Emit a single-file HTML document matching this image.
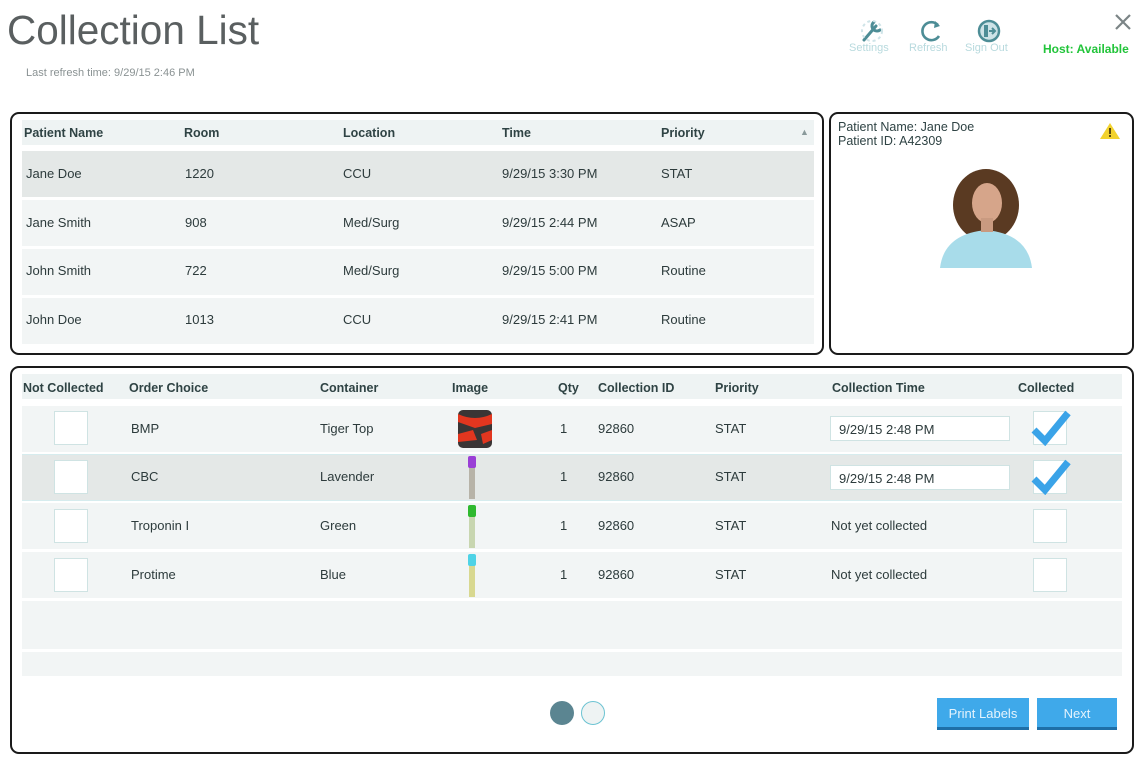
<!DOCTYPE html>
<html><head><meta charset="utf-8"><style>
*{margin:0;padding:0;box-sizing:border-box}
body{width:1144px;height:763px;background:#fff;font-family:"Liberation Sans",sans-serif;color:#2d3b3c;position:relative;overflow:hidden}
.a{position:absolute;white-space:nowrap}
.panel{position:absolute;border:2px solid #1a1a1a;border-radius:9px;background:#fff}
.h{font-weight:bold;font-size:12.5px;color:#2f4344}
.t{font-size:13px}
.row{position:absolute;background:#f2f5f5}
.cb{position:absolute;width:34px;height:34px;background:#fff;border:1px solid #cfe3e3}
</style></head><body>
<div class="a" style="left:7px;top:7px;font-size:40.5px;color:#5a5f60">Collection List</div>
<div class="a" style="left:26px;top:67px;font-size:11px;color:#8a9293">Last refresh time: 9/29/15 2:46 PM</div>

<svg class="a" style="left:858px;top:18px" width="28" height="26" viewBox="0 0 28 26"><g stroke="#4d8d96" stroke-width="3" stroke-linecap="round" fill="none"><path d="M6 22 L18 8"/><path d="M16 4 a5 5 0 0 0 6 8"/></g><circle cx="14" cy="13" r="10" fill="none" stroke="#cfe4e8" stroke-width="2" stroke-dasharray="3 3"/></svg>
<svg class="a" style="left:918px;top:18px" width="26" height="26" viewBox="0 0 26 26"><path d="M20 7 A9 9 0 1 0 21 18" fill="none" stroke="#4d8d96" stroke-width="2.6"/><path d="M17 3 L22 8 L16 10 Z" fill="#4d8d96"/></svg>
<svg class="a" style="left:976px;top:18px" width="26" height="26" viewBox="0 0 26 26"><circle cx="13" cy="13" r="10" fill="#cde3e7" stroke="#4d8d96" stroke-width="2.5"/><rect x="8" y="7" width="4" height="12" fill="#4d8d96"/><path d="M13 13 h6 M16 10 l3 3 -3 3" stroke="#4d8d96" stroke-width="2" fill="none"/></svg>
<div class="a" style="left:849px;top:42px;font-size:11px;color:#b8dade">Settings</div>
<div class="a" style="left:909px;top:42px;font-size:11px;color:#b8dade">Refresh</div>
<div class="a" style="left:965px;top:42px;font-size:11px;color:#b8dade">Sign Out</div>
<svg class="a" style="left:1114px;top:13px" width="18" height="18" viewBox="0 0 18 18"><path d="M2 2 L16 16 M16 2 L2 16" stroke="#7b8486" stroke-width="2.2"/></svg>
<div class="a" style="left:1043px;top:42px;font-size:12px;font-weight:bold;color:#22c43a">Host: Available</div>

<div class="panel" style="left:10px;top:112px;width:814px;height:243px"></div>
<div class="row" style="left:22px;top:120px;width:792px;height:25px;background:#eef3f3"></div>
<div class="a h" style="left:24px;top:126px">Patient Name</div>
<div class="a h" style="left:184px;top:126px">Room</div>
<div class="a h" style="left:343px;top:126px">Location</div>
<div class="a h" style="left:502px;top:126px">Time</div>
<div class="a h" style="left:661px;top:126px">Priority</div>
<div class="a" style="left:800px;top:127px;font-size:9px;color:#8a9a9b">▲</div>
<div class="row" style="left:22px;top:151px;width:792px;height:46px;background:#e4e8e7"></div>
<div class="row" style="left:22px;top:200px;width:792px;height:46px"></div>
<div class="row" style="left:22px;top:249px;width:792px;height:46px"></div>
<div class="row" style="left:22px;top:298px;width:792px;height:46px"></div>
<div class="a t" style="left:26px;top:166px">Jane Doe</div><div class="a t" style="left:185px;top:166px">1220</div><div class="a t" style="left:343px;top:166px">CCU</div><div class="a t" style="left:502px;top:166px">9/29/15 3:30 PM</div><div class="a t" style="left:661px;top:166px">STAT</div>
<div class="a t" style="left:26px;top:215px">Jane Smith</div><div class="a t" style="left:185px;top:215px">908</div><div class="a t" style="left:343px;top:215px">Med/Surg</div><div class="a t" style="left:502px;top:215px">9/29/15 2:44 PM</div><div class="a t" style="left:661px;top:215px">ASAP</div>
<div class="a t" style="left:26px;top:263px">John Smith</div><div class="a t" style="left:185px;top:263px">722</div><div class="a t" style="left:343px;top:263px">Med/Surg</div><div class="a t" style="left:502px;top:263px">9/29/15 5:00 PM</div><div class="a t" style="left:661px;top:263px">Routine</div>
<div class="a t" style="left:26px;top:312px">John Doe</div><div class="a t" style="left:185px;top:312px">1013</div><div class="a t" style="left:343px;top:312px">CCU</div><div class="a t" style="left:502px;top:312px">9/29/15 2:41 PM</div><div class="a t" style="left:661px;top:312px">Routine</div>

<div class="panel" style="left:829px;top:112px;width:305px;height:243px"></div>
<div class="a" style="left:838px;top:120px;font-size:12.5px;line-height:14px;color:#2f4344">Patient Name: Jane Doe<br>Patient ID: A42309</div>
<svg class="a" style="left:1099px;top:122px" width="22" height="18" viewBox="0 0 22 18"><path d="M11 1 L21 17 H1 Z" fill="#f2d22e"/><rect x="10" y="6" width="2" height="6" fill="#5a4a10"/><rect x="10" y="13" width="2" height="2" fill="#5a4a10"/></svg>
<svg class="a" style="left:940px;top:168px" width="92" height="100" viewBox="0 0 92 100"><ellipse cx="46" cy="37" rx="33" ry="36" fill="#5a3a22"/><path d="M0 100 Q4 66 46 62 Q88 66 92 100 Z" fill="#a8dcea"/><ellipse cx="47" cy="35" rx="15" ry="20" fill="#d6a58a"/><rect x="41" y="50" width="12" height="14" fill="#c99a80"/></svg>

<div class="panel" style="left:10px;top:366px;width:1124px;height:388px"></div>
<div class="row" style="left:22px;top:374px;width:1100px;height:25px;background:#eef3f3"></div>
<div class="a h" style="left:23px;top:381px">Not Collected</div>
<div class="a h" style="left:129px;top:381px">Order Choice</div>
<div class="a h" style="left:320px;top:381px">Container</div>
<div class="a h" style="left:452px;top:381px">Image</div>
<div class="a h" style="left:558px;top:381px">Qty</div>
<div class="a h" style="left:598px;top:381px">Collection ID</div>
<div class="a h" style="left:715px;top:381px">Priority</div>
<div class="a h" style="left:832px;top:381px">Collection Time</div>
<div class="a h" style="left:1018px;top:381px">Collected</div>
<div class="row" style="left:22px;top:406px;width:1100px;height:46px"></div>
<div class="row" style="left:22px;top:454px;width:1100px;height:47px;background:#e4e8e7;border-top:1px solid #d6ecee;border-bottom:1px solid #d6ecee"></div>
<div class="row" style="left:22px;top:503px;width:1100px;height:46px"></div>
<div class="row" style="left:22px;top:552px;width:1100px;height:46px"></div>
<div class="row" style="left:22px;top:601px;width:1100px;height:48px"></div>
<div class="row" style="left:22px;top:652px;width:1100px;height:24px"></div>

<div class="cb" style="left:54px;top:411px"></div><div class="cb" style="left:54px;top:460px"></div><div class="cb" style="left:54px;top:509px"></div><div class="cb" style="left:54px;top:558px"></div>
<div class="a t" style="left:131px;top:421px">BMP</div><div class="a t" style="left:320px;top:421px">Tiger Top</div>
<div class="a t" style="left:131px;top:469px">CBC</div><div class="a t" style="left:320px;top:469px">Lavender</div>
<div class="a t" style="left:131px;top:518px">Troponin I</div><div class="a t" style="left:320px;top:518px">Green</div>
<div class="a t" style="left:131px;top:567px">Protime</div><div class="a t" style="left:320px;top:567px">Blue</div>
<svg class="a" style="left:455px;top:408px" width="40" height="42" viewBox="0 0 40 42"><rect x="3" y="2" width="34" height="38" rx="5" fill="#3a3535"/><path d="M3 6 Q20 14 37 6 V16 L20 20 L3 14Z M3 26 L18 22 L22 32 L3 34Z M26 26 L37 22 V32 L28 36Z" fill="#e2361f"/></svg>
<svg class="a" style="left:465px;top:455px" width="14" height="46" viewBox="0 0 14 46"><rect x="4" y="10" width="6" height="34" fill="#b7b3a8"/><rect x="3" y="1" width="8" height="12" rx="2" fill="#9a3fd6"/></svg>
<svg class="a" style="left:465px;top:504px" width="14" height="46" viewBox="0 0 14 46"><rect x="4" y="10" width="6" height="34" fill="#c8d6b0"/><rect x="3" y="1" width="8" height="12" rx="2" fill="#2fb92f"/></svg>
<svg class="a" style="left:465px;top:553px" width="14" height="46" viewBox="0 0 14 46"><rect x="4" y="10" width="6" height="34" fill="#d8d890"/><rect x="3" y="1" width="8" height="12" rx="2" fill="#4fd3e6"/></svg>
<div class="a t" style="left:560px;top:421px">1</div><div class="a t" style="left:598px;top:421px">92860</div><div class="a t" style="left:715px;top:421px">STAT</div>
<div class="a t" style="left:560px;top:469px">1</div><div class="a t" style="left:598px;top:469px">92860</div><div class="a t" style="left:715px;top:469px">STAT</div>
<div class="a t" style="left:560px;top:518px">1</div><div class="a t" style="left:598px;top:518px">92860</div><div class="a t" style="left:715px;top:518px">STAT</div>
<div class="a t" style="left:560px;top:567px">1</div><div class="a t" style="left:598px;top:567px">92860</div><div class="a t" style="left:715px;top:567px">STAT</div>
<div class="a" style="left:830px;top:416px;width:180px;height:25px;background:#fff;border:1px solid #cfe3e3;font-size:13px;padding:5px 8px">9/29/15 2:48 PM</div>
<div class="a" style="left:830px;top:465px;width:180px;height:25px;background:#fff;border:1px solid #cfe3e3;font-size:13px;padding:5px 8px">9/29/15 2:48 PM</div>
<div class="a t" style="left:831px;top:518px">Not yet collected</div>
<div class="a t" style="left:831px;top:567px">Not yet collected</div>
<div class="cb" style="left:1033px;top:411px"></div><div class="cb" style="left:1033px;top:460px"></div><div class="cb" style="left:1033px;top:509px"></div><div class="cb" style="left:1033px;top:558px"></div>
<svg class="a" style="left:1031px;top:410px" width="40" height="36" viewBox="0 0 40 36"><path d="M3 20 L14 31 L37 3" fill="none" stroke="#3aa3e8" stroke-width="7"/></svg>
<svg class="a" style="left:1031px;top:459px" width="40" height="36" viewBox="0 0 40 36"><path d="M3 20 L14 31 L37 3" fill="none" stroke="#3aa3e8" stroke-width="7"/></svg>

<div class="a" style="left:550px;top:701px;width:24px;height:24px;border-radius:50%;background:#5b8591"></div>
<div class="a" style="left:581px;top:701px;width:24px;height:24px;border-radius:50%;background:#eef3f3;border:1.5px solid #6cc3d2"></div>
<div class="a" style="left:937px;top:698px;width:92px;height:32px;background:#3fa9ea;border-bottom:3px solid #1e6fa8;color:#e4f3fd;font-size:13px;text-align:center;line-height:32px">Print Labels</div>
<div class="a" style="left:1037px;top:698px;width:80px;height:32px;background:#3fa9ea;border-bottom:3px solid #1e6fa8;color:#e4f3fd;font-size:13px;text-align:center;line-height:32px">Next</div>
</body></html>
